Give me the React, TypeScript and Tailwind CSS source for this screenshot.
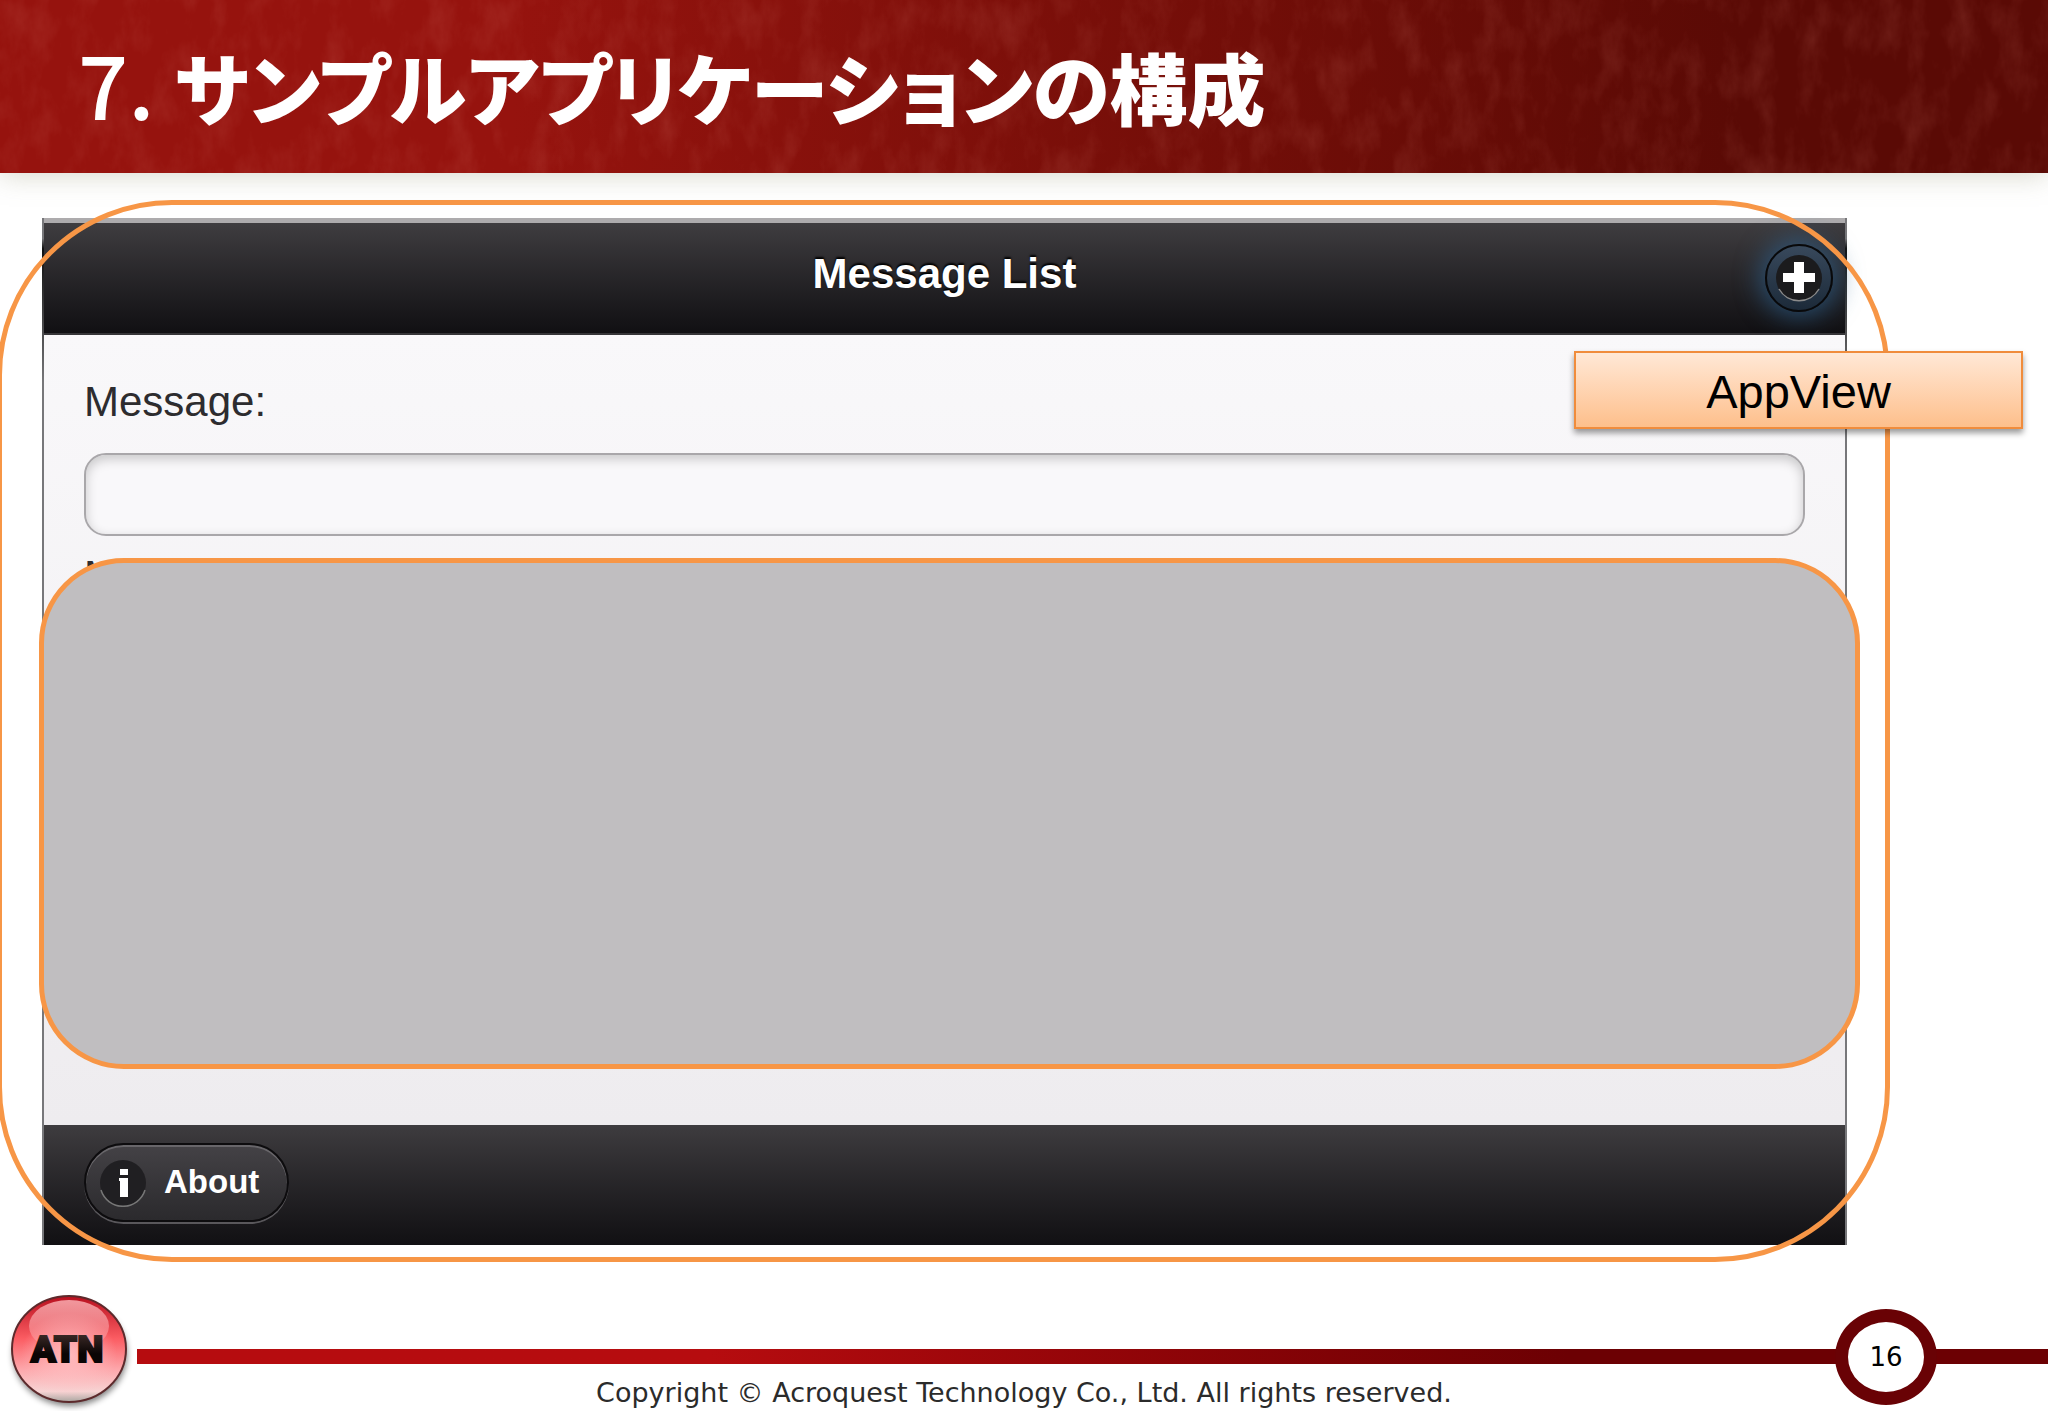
// src/components/slides/AppViewSlide.tsx
import { useState } from 'react';

const COPYRIGHT = 'Copyright © Acroquest Technology Co., Ltd. All rights reserved.';

// Red title band with a marbled surface
function SlideTitle() {
  return (
    <header className="relative flex h-[173px] items-center bg-linear-to-r from-[#96130e] from-25% to-[#5a0a05] to-85% pb-[6px] pl-[78px] shadow-[0_2px_26px_rgba(140,140,105,0.35)]">
      <svg className="absolute inset-0 h-full w-full" aria-hidden="true">
        <filter id="marble" x="0" y="0" width="100%" height="100%">
          <feTurbulence type="fractalNoise" baseFrequency="0.04 0.02" numOctaves="6" seed="8" />
          <feColorMatrix values="0 0 0 0 0.75  0 0 0 0 0.25  0 0 0 0 0.2  1.6 0 0 0 -0.68" />
        </filter>
        <rect width="100%" height="100%" filter="url(#marble)" opacity="0.18" />
      </svg>
      <h1 className="relative flex items-baseline gap-5 whitespace-nowrap font-['Noto_Sans_CJK_JP',sans-serif] text-[78px] leading-[100px] font-black text-white [font-feature-settings:'palt']">
        <span className="text-[88px] font-medium">7.</span>
        <span>サンプルアプリケーションの構成</span>
      </h1>
    </header>
  );
}

function PlusButton() {
  return (
    <button
      type="button"
      aria-label="Add"
      className="flex h-[68px] w-[68px] items-center justify-center rounded-full border-2 border-[#08090b] bg-linear-to-b from-[#38495c] to-[#1c2a39] shadow-[0_0_24px_6px_rgba(46,98,145,0.65)]"
    >
      <svg width="50" height="50" viewBox="0 0 50 50">
        <circle cx="25" cy="25" r="23" fill="#1b1b1d" />
        <path d="M5 36 A23 23 0 0 0 45 36" fill="none" stroke="#8b8b8b" strokeWidth="1.5" />
        <path d="M20 9h10v11h11v9H30v11H20V29H9v-9h11z" fill="#fff" />
      </svg>
    </button>
  );
}

function AboutButton() {
  return (
    <button
      type="button"
      className="flex h-[79px] items-center gap-4 rounded-full border-2 border-[#0d0c0e] bg-linear-to-b from-[#444246] to-[#2b2a2d] pr-7 pl-3 shadow-[inset_0_2px_0_#68666a,0_2px_0_#59575b]"
    >
      <svg width="50" height="50" viewBox="0 0 50 50" aria-hidden="true">
        <circle cx="25" cy="26" r="23" fill="#201f22" />
        <path d="M3 33 A23 23 0 0 0 47 33" fill="none" stroke="#777" strokeWidth="1.5" />
        <path d="M22 12h8v6h-8zM21 21h9v19h-8v-3V24h-1z" fill="#fff" />
      </svg>
      <span className="text-[33px] leading-10 font-bold text-white">About</span>
    </button>
  );
}

function AppScreen() {
  const [message, setMessage] = useState('');

  return (
    <div className="relative mr-[201px] ml-[42px] bg-linear-to-b from-[#77777a] from-2% via-[#111] via-3% to-[#77777a] to-16% px-[2px] font-['Liberation_Sans',Arial,sans-serif]">
      {/* Top toolbar */}
      <div className="relative flex h-[117px] items-center justify-center border-t-[5px] border-b-2 border-t-[#adabad] border-b-[#363538] bg-linear-to-b from-[#3f3d40] to-[#111013] pb-2">
        <h2 className="text-[42px] leading-[48px] font-bold text-white [text-shadow:0_-2px_2px_#000]">Message List</h2>
        <div className="absolute top-[21px] right-3">
          <PlusButton />
        </div>
      </div>

      {/* Form */}
      <div className="relative min-h-[790px] bg-linear-to-b from-[#f9f8fa] to-[#eeecef] px-10 pt-[43px] text-[42px] leading-[48px] text-[#2d2c2f]">
        <label htmlFor="message" className="block">
          Message:
        </label>
        <input
          id="message"
          type="text"
          value={message}
          onChange={(e) => setMessage(e.target.value)}
          className="mt-[27px] block h-[83px] w-full rounded-[22px] border-2 border-[#a9a7aa] bg-[#f9f8fa] px-5 shadow-[inset_0_4px_12px_rgba(0,0,0,0.2)] outline-none"
        />
        <p className="mt-4">M</p>
        {/* Area that belongs to the nested view */}
        <div className="absolute top-[223px] -right-[15px] bottom-[56px] -left-[5px] rounded-[85px] border-5 border-[#f79646] bg-[#c0bec0]" />
      </div>

      {/* Bottom toolbar */}
      <div className="flex h-[120px] items-center bg-linear-to-b from-[#3e3c3f] to-[#111013] px-10 pb-[6px]">
        <AboutButton />
      </div>

      {/* Outline and caption of AppView */}
      <div className="pointer-events-none absolute -top-[18px] -right-[43px] -bottom-[17px] -left-[45px] rounded-[175px] border-5 border-[#f79646]" />
      <div className="absolute top-[133px] -right-[176px] flex h-[78px] w-[449px] items-center justify-center border-2 border-[#f08c3c] bg-linear-to-b from-[#ffe8d6] to-[#fdbf8b] pt-1 text-[47px] leading-[56px] text-black shadow-[0_4px_6px_rgba(0,0,0,0.4)]">
        AppView
      </div>
    </div>
  );
}

function AtnLogo() {
  return (
    <svg className="h-[124px] w-[137px] shrink-0" viewBox="0 0 137 124" role="img" aria-label="ATN">
      <defs>
        <linearGradient id="ball" x1="0" y1="0" x2="0" y2="1">
          <stop offset="0" stopColor="#b80f1e" />
          <stop offset="0.4" stopColor="#fb5c62" />
          <stop offset="0.7" stopColor="#fda9ad" />
          <stop offset="0.9" stopColor="#f7d3d3" />
          <stop offset="1" stopColor="#a9a5a0" />
        </linearGradient>
        <linearGradient id="gloss" x1="0" y1="0" x2="0" y2="1">
          <stop offset="0" stopColor="#ffb9bc" stopOpacity="0.8" />
          <stop offset="1" stopColor="#ffb9bc" stopOpacity="0.2" />
        </linearGradient>
        <radialGradient id="glow">
          <stop offset="0" stopColor="#ffc0c3" stopOpacity="0.9" />
          <stop offset="1" stopColor="#ffc4c7" stopOpacity="0" />
        </radialGradient>
        <linearGradient id="ink" x1="0" y1="0" x2="0" y2="1">
          <stop offset="0" stopColor="#4a3430" />
          <stop offset="0.6" stopColor="#0a0505" />
        </linearGradient>
        <filter id="soft" x="-20%" y="-20%" width="140%" height="140%">
          <feGaussianBlur stdDeviation="3" />
        </filter>
      </defs>
      <ellipse cx="70" cy="67" rx="57" ry="52" fill="#000" opacity="0.5" filter="url(#soft)" />
      <ellipse cx="69" cy="62" rx="57" ry="53" fill="url(#ball)" stroke="#5d2a2c" strokeWidth="2" />
      <ellipse cx="69" cy="68" rx="48" ry="42" fill="url(#glow)" />
      <ellipse cx="69" cy="39" rx="40" ry="26" fill="url(#gloss)" />
      <text
        x="67"
        y="75"
        textAnchor="middle"
        fill="url(#ink)"
        stroke="url(#ink)"
        strokeWidth="2"
        className="font-['Roboto',sans-serif] text-[37px] font-black"
      >
        ATN
      </text>
    </svg>
  );
}

function SlideFooter() {
  return (
    <footer className="mt-[42px] font-['DejaVu_Sans',Verdana,sans-serif] text-[#2b2b2b]">
      <div className="relative flex h-[124px] items-center">
        <AtnLogo />
        <div className="mt-[15px] h-[15px] flex-1 bg-linear-to-r from-[#b60c0f] from-30% to-[#6c0003] to-75%" />
        {/* Page number sits on the rule */}
        <div className="absolute top-[22px] right-[111px] flex h-[96px] w-[102px] items-center justify-center rounded-[50%] border-[13px] border-[#690205] bg-white text-[26px] leading-8 text-black">
          16
        </div>
      </div>
      <p className="-mt-[34px] text-center text-[27px] leading-8">{COPYRIGHT}</p>
    </footer>
  );
}

export default function App() {
  return (
    <div className="min-h-screen overflow-hidden bg-white">
      <SlideTitle />
      <main className="pt-[45px]">
        <AppScreen />
      </main>
      <SlideFooter />
    </div>
  );
}
